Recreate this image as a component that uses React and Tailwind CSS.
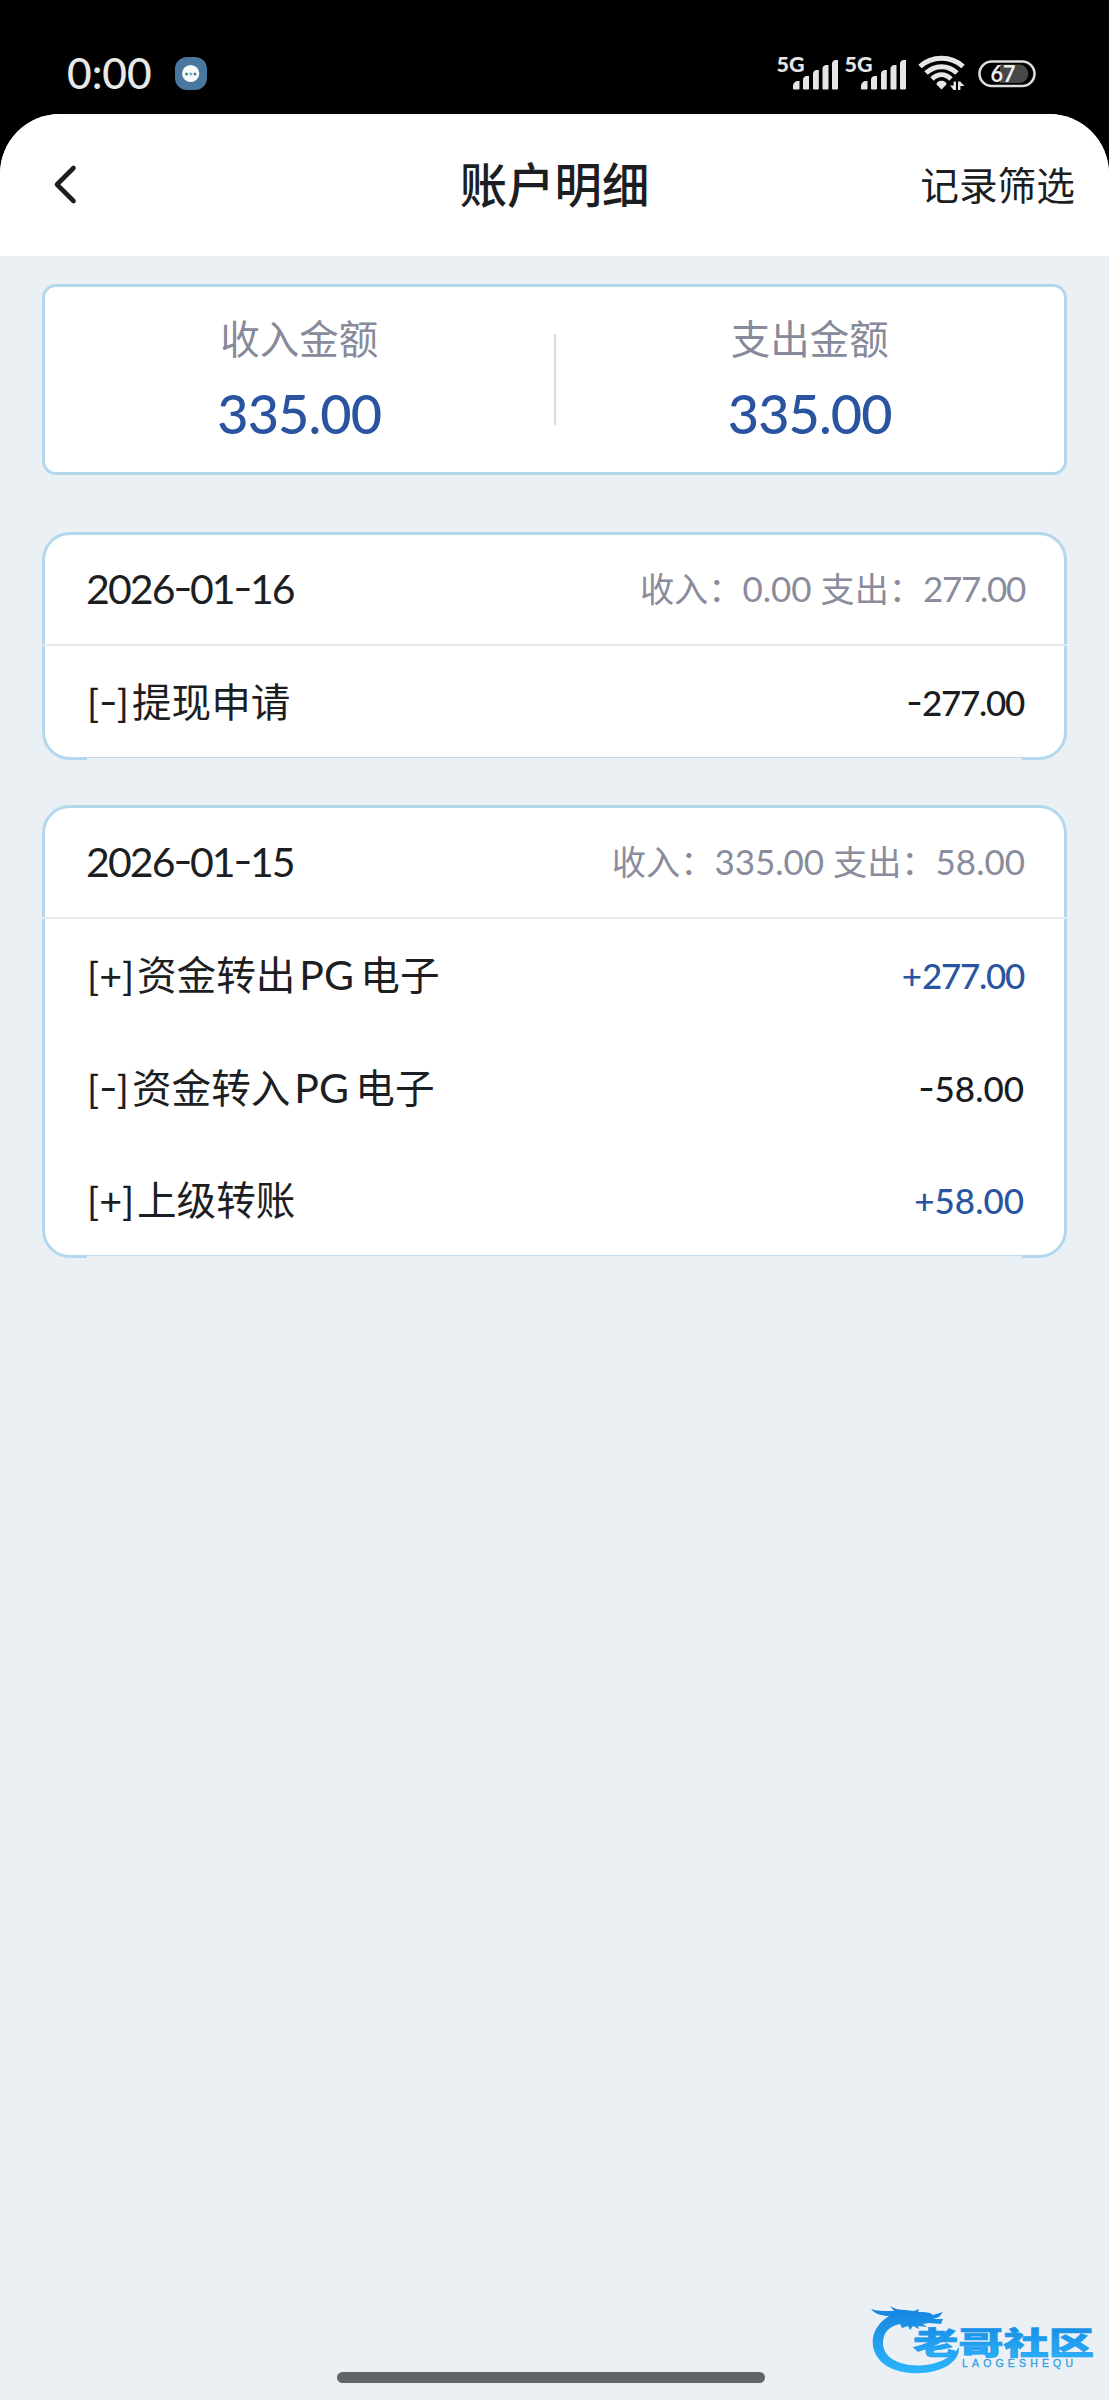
import React from 'react'

const days = [
    {
        date: "2026-01-16",
        income: "0.00",
        expense: "277.00",
        rows: [
            { sign: "-", title: "提现申请", amount: "277.00" },
        ],
    },
    {
        date: "2026-01-15",
        income: "335.00",
        expense: "58.00",
        rows: [
            { sign: "+", title: "资金转出", game: "PG", tail: "电子", amount: "277.00" },
            { sign: "-", title: "资金转入", game: "PG", tail: "电子", amount: "58.00" },
            { sign: "+", title: "上级转账", amount: "58.00" },
        ],
    },
];

const Signal = () => (
    <svg className="overflow-visible" width="62" height="36" viewBox="0 0 62 36" fill="#e6e6e6">
        <text x="-0.5" y="17.500" fontSize="21.500" fontWeight="900" fontFamily="Lato, sans-serif" textLength="28" lengthAdjust="spacingAndGlyphs">5G</text>
        <path d="M16 34.500v-2.500a5 5 0 0 1 5-5h1.500v7.500a1 1 0 0 1-1 1h-4.500a1 1 0 0 1-1-1z" />
        <path d="M26 25.500a4 4 0 0 1 4-3.500h2v12.500a1 1 0 0 1-1 1h-4a1 1 0 0 1-1-1z" />
        <path d="M36 19.500a4 4 0 0 1 4-3.500h1.800v18.500a1 1 0 0 1-1 1h-3.800a1 1 0 0 1-1-1z" />
        <path d="M45.500 14.500a4 4 0 0 1 4-3.500h2v23.500a1 1 0 0 1-1 1h-4a1 1 0 0 1-1-1z" />
        <path d="M55 9.500a4 4 0 0 1 4-3.500h2v28.500a1 1 0 0 1-1 1h-4a1 1 0 0 1-1-1z" />
    </svg>
)

const Wifi = () => (
    <svg width="48" height="36" viewBox="0 0 48 36" fill="none" stroke="#e6e6e6" strokeWidth="5">
        <path d="M2 11.500C14 .5 33 .5 45 11.500" />
        <path d="M8 18C17 9.500 30 9.500 39 18" />
        <path d="M14 24C20 18.200 27 18.200 33 24" />
        <path d="M18.500 29.500c0-5 10-5 10 0l-5 5z" fill="#e6e6e6" stroke="none" />
        <path d="M36.800 26.500V35M41.200 35v-8.500" strokeWidth="2.400" />
        <path d="M32 30.500h4v5zM42 26.500v4.500h4.500z" fill="#e6e6e6" stroke="none" />
    </svg>
)

const Battery = () => (
    <svg width="58" height="28" viewBox="0 0 58 28">
        <rect x="1.500" y="1.500" width="55" height="24.500" rx="12.250" fill="none" stroke="#dcdcdc" strokeWidth="2.600" />
        <path d="M22 4.500h20a9.300 9.300 0 0 1 0 18.500H22z" fill="#484848" />
        <text x="12.500" y="21.500" fontSize="22" fontWeight="700" fill="#eee" fontFamily="Lato, sans-serif" textLength="25" lengthAdjust="spacingAndGlyphs">67</text>
    </svg>
)

const StatusBar = () => (
    <div className="flex h-[114px] shrink-0 items-start justify-between bg-black pl-[67px] pr-[73px] text-[#e8e8e8]">
        <div className="flex items-center gap-[20px] pt-[46px]">
            <span className="w-[88px] text-[42.500px] font-medium leading-[54px]">0:00</span>
            <svg width="32" height="33" viewBox="0 0 32 33">
                <rect width="32" height="33" rx="12" fill="#4a779d" />
                <circle cx="15.700" cy="16.500" r="8.600" fill="#f6fafc" />
                <circle cx="11.500" cy="17" r="1.500" fill="#4f8a62" />
                <circle cx="15.800" cy="17" r="1.500" fill="#67b7cf" />
                <circle cx="20" cy="17" r="1.500" fill="#5b7f8a" />
            </svg>
        </div>
        <div className="flex items-start pt-[54px]">
            <Signal />
            <div className="ml-[6px]"><Signal /></div>
            <div className="ml-[11px] mt-px"><Wifi /></div>
            <div className="ml-[12px] mt-[6px]"><Battery /></div>
        </div>
    </div>
)

const Header = () => (
    <div className="grid h-[142px] grid-cols-3 items-center bg-white pl-[52px] pr-[34px] text-[#1d1e22]">
        <svg width="26" height="42" viewBox="0 0 26 42" fill="none" stroke="currentColor" strokeWidth="4.600" strokeLinecap="round" strokeLinejoin="round">
            <path d="M21.500 4L5 20.500L21.500 37" />
        </svg>
        <h1 className="-ml-[18px] whitespace-nowrap text-center text-[47.400px] font-medium leading-[60px]">账户明细</h1>
        <span className="whitespace-nowrap text-right text-[38.700px] leading-[50px]">记录筛选</span>
    </div>
)

const Total = ({ label, value }) => (
    <div className="flex flex-1 flex-col items-center">
        <span className="mt-[27px] text-[39.500px] leading-[50px] text-[#868a9a]">{label}</span>
        <span className="mt-[18px] text-[54px] font-medium leading-[64px] tracking-[-0.900px] text-[#2a549f]">{value}</span>
    </div>
)

const Num = ({ value }) => (
    <span className={value.includes("77") ? "tracking-[-1.300px]" : ""}>{value}</span>
)

const Dash = () => (
    <span className="mx-[1.500px] inline-block -translate-y-[2px] scale-x-130">-</span>
)

const Row = ({ sign, title, game, tail, amount }) => (
    <div className="flex h-[112.500px] items-center justify-between whitespace-nowrap pl-[42px] pr-[40px]">
        <span className="flex items-center text-[39.600px] leading-[50px] text-[#1d1e22]">
            <span className={sign === "+" ? "w-[50px]" : "w-[45px]"}>[{sign === "-" ? <Dash /> : sign}]</span>
            {title}
            {game && <span className="w-[65px] pl-[4px] text-[41px]">{game}</span>}
            {tail}
        </span>
        <span className={`text-[35px] font-medium leading-[50px] ${sign === "+" ? "text-[#2a549f]" : "text-[#1b1c1f]"}`}>
            {sign === "-" ? <Dash /> : sign}<Num value={amount} />
        </span>
    </div>
)

const Sum = ({ label, value }) => (
    <span>{label}：<span className="text-[35px]"><Num value={value} /></span></span>
)

const DayCard = ({ date, income, expense, rows }) => (
    <div className="relative rounded-[28px] border-3 border-[#b3d8ee] bg-white">
        <div className="-mx-[3px] flex h-[111px] items-center justify-between border-b-2 border-[#e7eaec] pb-[2px] pl-[44px] pr-[42px]">
            <span className="text-[41px] leading-[50px] tracking-[-1.900px] text-[#1d1e22]">
                {date.split("-").map((part, i) => <React.Fragment key={i}>{i > 0 && <Dash />}{part}</React.Fragment>)}
            </span>
            <span className="whitespace-pre text-[34.200px] leading-[50px] text-[#898c9c]"><Sum label="收入" value={income} /> <Sum label="支出" value={expense} /></span>
        </div>
        <div className="-mb-[2px]">
            {rows.map((row, i) => <Row key={i} {...row} />)}
        </div>
        {/* the last row's hairline sits over the card border */}
        <div className="absolute inset-x-[42px] -bottom-[3px] h-[3px] border-t border-[#c4dae8] bg-[#e7f0f5]"></div>
    </div>
)

const Watermark = () => (
    <svg className="absolute left-[868px] top-[2298px]" width="236" height="80" viewBox="0 0 236 80">
        <defs>
            <linearGradient id="wm" x1="0" y1="0" x2="0" y2="1">
                <stop offset="0" stopColor="#1583df" />
                <stop offset="1" stopColor="#2cb5fb" />
            </linearGradient>
        </defs>
        <g fill="url(#wm)">
            <path d="M3 11c6 2 11 2 18 2l5 0-4-5c5 3 10 4 15 4l9 1 5-2-1 3c7 0 12 0 15 3l10-3-4 5-6 2 10 0-2 5-12-1-6 1 4 3-9-1 1 3-6-3-3 4-2-4-6 2-2-4C21 28 15 35 15 45c0 13 13 22 34 22.500 19 0 35-7.500 42-18.500 1 15-17 26-42 26.300C24 75.300 5 64 4.700 44 4.700 34 10 25 21 18c-7 0-14-2-18-7z" />
        </g>
        <text x="45" y="55.500" fontSize="31" fontWeight="900" fill="url(#wm)" stroke="#1f9bee" strokeWidth="0.700" fontFamily="'Noto Sans CJK SC', sans-serif" textLength="181" lengthAdjust="spacingAndGlyphs">老哥社区</text>
        <text x="94" y="69" fontSize="10.500" fill="#2e9fe6" stroke="#2e9fe6" strokeWidth="0.300" fontFamily="'Liberation Sans', sans-serif" textLength="111">LAOGESHEQU</text>
    </svg>
)

const App = () => {
    return (
        <div className="relative flex h-[2400px] w-[1109px] flex-col overflow-hidden bg-black font-['Lato','Noto_Sans_CJK_SC',sans-serif]">
            <StatusBar />
            <div className="flex-1 overflow-hidden rounded-t-[60px] bg-[#eaf0f3]">
                <Header />
                <div className="flex flex-col px-[42px] pt-[28px]">
                    <div className="flex h-[191px] rounded-[14px] border-3 border-[#b3d8ee] bg-white">
                        <Total label="收入金额" value="335.00" />
                        <div className="mt-[47px] h-[91px] w-[2px] bg-[#d9dade]"></div>
                        <Total label="支出金额" value="335.00" />
                    </div>
                    <div className="mt-[57px] flex flex-col gap-[45.500px]">
                        {days.map((day) => <DayCard key={day.date} {...day} />)}
                    </div>
                </div>
            </div>
            <Watermark />
            <div className="absolute left-[337px] top-[2372px] h-[11px] w-[428px] rounded-full bg-[#626566]"></div>
        </div>
    )
}

export default App
